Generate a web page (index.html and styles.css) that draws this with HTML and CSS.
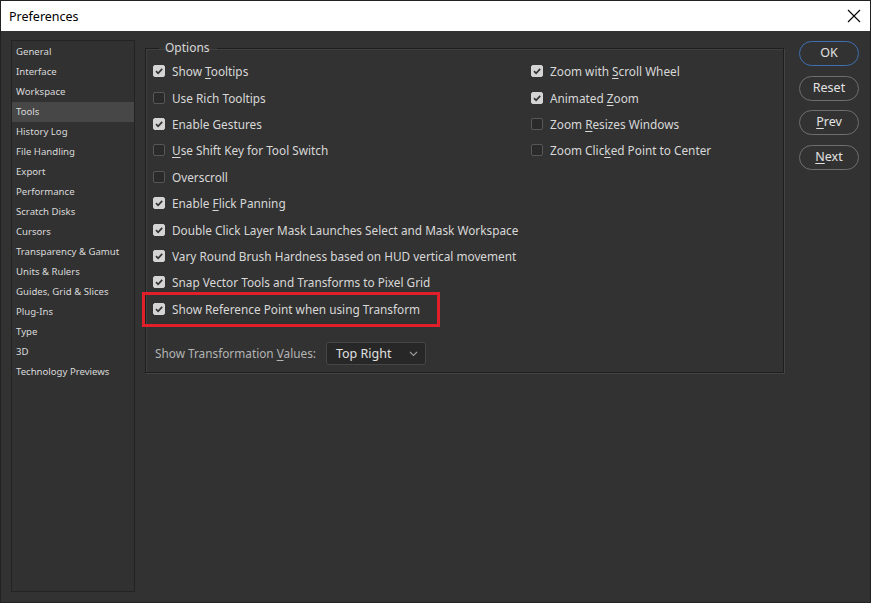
FILE: index.html
```html
<!DOCTYPE html>
<html>
<head>
<meta charset="utf-8">
<link rel="stylesheet" href="styles.css">
</head>
<body>
<div class="window">
  <div class="titlebar">
    <span class="title">Preferences</span>
    <svg class="close" width="14" height="14" viewBox="0 0 14 14"><path d="M1 1 L13 13 M13 1 L1 13" stroke="#000" stroke-width="1.1" fill="none"/></svg>
  </div>
  <div class="body">
    <ul class="sidebar">
      <li>General</li>
      <li>Interface</li>
      <li>Workspace</li>
      <li class="selected">Tools</li>
      <li>History Log</li>
      <li>File Handling</li>
      <li>Export</li>
      <li>Performance</li>
      <li>Scratch Disks</li>
      <li>Cursors</li>
      <li>Transparency &amp; Gamut</li>
      <li>Units &amp; Rulers</li>
      <li>Guides, Grid &amp; Slices</li>
      <li>Plug-Ins</li>
      <li>Type</li>
      <li>3D</li>
      <li>Technology Previews</li>
    </ul>
    <fieldset class="options">
      <legend>Options</legend>
      <div class="cols">
        <div class="col col-left">
          <label class="opt"><span class="cb on"></span><span>Show <u>T</u>ooltips</span></label>
          <label class="opt"><span class="cb"></span><span>Use Rich Tooltips</span></label>
          <label class="opt"><span class="cb on"></span><span>Enable Gestures</span></label>
          <label class="opt"><span class="cb"></span><span><u>U</u>se Shift Key for Tool Switch</span></label>
          <label class="opt"><span class="cb"></span><span>Overscroll</span></label>
          <label class="opt"><span class="cb on"></span><span>Enable <u>F</u>lick Panning</span></label>
          <label class="opt"><span class="cb on"></span><span>Double Click Layer Mask Launches Select and Mask Workspace</span></label>
          <label class="opt"><span class="cb on"></span><span>Vary Round Brush Hardness based on HUD vertical movement</span></label>
          <label class="opt"><span class="cb on"></span><span>Snap Vector Tools and Transforms to Pixel Grid</span></label>
          <label class="opt highlighted"><span class="cb on"></span><span>Show Reference Point when using Transform</span></label>
        </div>
        <div class="col">
          <label class="opt"><span class="cb on"></span><span>Zoom with <u>S</u>croll Wheel</span></label>
          <label class="opt"><span class="cb on"></span><span>Animated <u>Z</u>oom</span></label>
          <label class="opt"><span class="cb"></span><span>Zoom <u>R</u>esizes Windows</span></label>
          <label class="opt"><span class="cb"></span><span>Zoom Clic<u>k</u>ed Point to Center</span></label>
        </div>
      </div>
      <div class="values-row">
        <span class="values-label">Show Transformation <u>V</u>alues:</span>
        <div class="select">
          <span>Top Right</span>
          <svg width="9" height="6" viewBox="0 0 9 6"><path d="M1 1 L4.5 4.5 L8 1" stroke="#9a9a9a" stroke-width="1.1" fill="none"/></svg>
        </div>
      </div>
    </fieldset>
    <div class="buttons">
      <button class="btn primary">OK</button>
      <button class="btn">Reset</button>
      <button class="btn"><u>P</u>rev</button>
      <button class="btn"><u>N</u>ext</button>
    </div>
  </div>
</div>
</body>
</html>
```
FILE: styles.css
```css
*, *::before, *::after { box-sizing: border-box; }
html, body { margin: 0; padding: 0; background: #323232; }
body { font-family: "Noto Sans", "Open Sans", sans-serif; }

.window {
  width: 871px;
  height: 603px;
  border: 1px solid #222;
  display: flex;
  flex-direction: column;
  background: #323232;
}

.titlebar {
  height: 30px;
  flex: 0 0 30px;
  background: #fff;
  display: flex;
  align-items: center;
  justify-content: space-between;
  padding: 0 9px 0 8px;
}
.title {
  font-size: 12.5px;
  color: #000;
}
.close { display: block; }

.body {
  flex: 1;
  display: flex;
  align-items: flex-start;
  padding: 9px 0 0 10px;
}

.sidebar {
  list-style: none;
  margin: 0;
  padding: 1px 0 0 0;
  width: 124px;
  height: 552px;
  border: 1px solid #232323;
  background: #313131;
  font-size: 9.6px;
  color: #dadada;
}
.sidebar li {
  height: 20px;
  line-height: 20px;
  padding-left: 4px;
  white-space: nowrap;
}
.sidebar li.selected {
  background: #474747;
}

.options {
  margin: 1px 0 0 10px;
  padding: 3px 0 0 7px;
  width: 639px;
  height: 332px;
  border: 1px solid #1e1e1e;
  box-shadow: 1px 1px 0 #444, inset 1px 1px 0 #404040;
  font-size: 11.8px;
  color: #d8d8d8;
}
.options legend {
  margin-left: 6px;
  padding: 0 7px 0 6px;
  font-size: 12px;
  color: #d8d8d8;
  line-height: 14px;
}

.cols {
  display: grid;
  grid-template-columns: 378px 1fr;
}
.col {
  display: flex;
  flex-direction: column;
}
.opt {
  height: 26.4px;
  display: flex;
  align-items: center;
  white-space: nowrap;
  position: relative;
}
.opt u { text-decoration-thickness: 1px; text-underline-offset: 2px; }
.cb {
  width: 12px;
  height: 12px;
  margin-right: 7px;
  border-radius: 2px;
  background: #2a2a2a;
  border: 1px solid #565656;
  flex: 0 0 12px;
}
.cb.on {
  background: #d4d4d4 url("data:image/svg+xml;utf8,<svg xmlns='http://www.w3.org/2000/svg' width='12' height='12' viewBox='0 0 12 12'><path d='M3 6.2 L5.1 8.3 L9.2 3.9' stroke='%23333' stroke-width='1.7' fill='none'/></svg>") center / 12px 12px no-repeat;
  border-color: #d4d4d4;
}

.highlighted::after {
  content: "";
  position: absolute;
  left: -11px;
  top: -4px;
  width: 298px;
  height: 35px;
  border: 3px solid #e01f2b;
}

.values-row {
  display: flex;
  align-items: center;
  margin-top: 20px;
  padding-left: 2px;
}
.values-label {
  color: #b4b4b4;
  font-size: 11.8px;
  margin-right: 10px;
}
.values-label u { text-underline-offset: 2px; }
.select {
  width: 100px;
  height: 23px;
  background: #272727;
  border: 1px solid #464646;
  border-radius: 3px;
  display: flex;
  align-items: center;
  justify-content: space-between;
  padding: 0 7px 0 9px;
  color: #e0e0e0;
  font-size: 12.5px;
}
.select svg { display: block; margin-top: 2px; }

.buttons {
  margin: 1px 0 0 15px;
  display: flex;
  flex-direction: column;
  gap: 9.5px;
}
.btn {
  width: 60px;
  height: 25px;
  border-radius: 13px;
  border: 1.5px solid #6e6e6e;
  background: #323232;
  color: #e2e2e2;
  font-family: "Noto Sans", "Open Sans", sans-serif;
  font-size: 12.5px;
  padding: 0;
  line-height: 1;
}
.btn.primary { border-color: #3f6fb0; }
.btn u { text-underline-offset: 2px; }
```
